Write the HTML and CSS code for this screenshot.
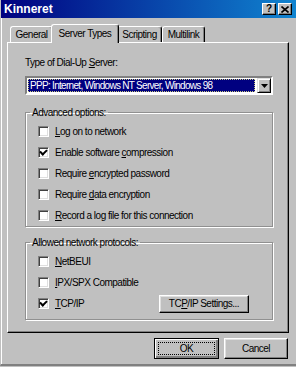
FILE: index.html
```html
<!DOCTYPE html>
<html lang="en">
<head>
    <meta charset="UTF-8">
    <title>Kinneret</title>
    <link rel="stylesheet" href="styles.css">
</head>
<body>
    <div class="window">
        <div class="titlebar">
            <span class="title">Kinneret</span>
            <div class="title-buttons">
                <span class="tbtn">?</span>
                <span class="tbtn close">
                    <svg width="8" height="7" viewBox="0 0 8 7"><path d="M0.5 0.5 L7.5 6.5 M7.5 0.5 L0.5 6.5" stroke="#000" stroke-width="1.6"/></svg>
                </span>
            </div>
        </div>

        <div class="content">
            <div class="tabs">
                <div class="tab">General</div>
                <div class="tab active">Server Types</div>
                <div class="tab">Scripting</div>
                <div class="tab">Multilink</div>
            </div>

            <div class="panel">
                <div class="label">Type of Dial-Up <u>S</u>erver:</div>
                <div class="combo">
                    <div class="combo-value"><span>PPP: Internet, Windows NT Server, Windows 98</span></div>
                    <div class="combo-arrow">
                        <svg width="7" height="4" viewBox="0 0 7 4"><path d="M0 0 H7 L3.5 4 Z" fill="#000"/></svg>
                    </div>
                </div>

                <fieldset class="group advanced">
                    <legend>Advanced options:</legend>
                    <div class="check"><span class="box"></span><span><u>L</u>og on to network</span></div>
                    <div class="check"><span class="box checked"></span><span>Enable software <u>c</u>ompression</span></div>
                    <div class="check"><span class="box"></span><span>Require <u>e</u>ncrypted password</span></div>
                    <div class="check"><span class="box"></span><span>Require <u>d</u>ata encryption</span></div>
                    <div class="check"><span class="box"></span><span><u>R</u>ecord a log file for this connection</span></div>
                </fieldset>

                <fieldset class="group protocols">
                    <legend>Allowed network protocols:</legend>
                    <div class="check"><span class="box"></span><span><u>N</u>etBEUI</span></div>
                    <div class="check"><span class="box"></span><span><u>I</u>PX/SPX Compatible</span></div>
                    <div class="check last">
                        <span class="box checked"></span><span><u>T</u>CP/IP</span>
                        <button class="btn settings">TC<u>P</u>/IP Settings...</button>
                    </div>
                </fieldset>
            </div>

            <div class="actions">
                <button class="btn default"><span class="focus">OK</span></button>
                <button class="btn">Cancel</button>
            </div>
        </div>
    </div>
</body>
</html>
```

FILE: styles.css
```css
body {
    margin: 0;
    background-color: #c0c0c0;
    font-family: 'Liberation Sans', Arial, sans-serif;
    font-size: 10px;
    letter-spacing: -0.5px;
    color: #000;
}
u {
    text-decoration: underline;
    text-underline-offset: 1px;
}
.window {
    width: 296px;
    height: 366px;
    box-sizing: border-box;
    border-left: 1px solid #c0c0c0;
    border-bottom: 2px solid #808080;
    box-shadow: inset 1px 0 #fff;
    background-color: #c0c0c0;
}
.titlebar {
    height: 18px;
    display: flex;
    align-items: center;
    justify-content: space-between;
    padding: 0 4px 0 3px;
    background: linear-gradient(to right, #000080, #1084d0);
}
.title {
    color: #fff;
    font-weight: bold;
    font-size: 12px;
    letter-spacing: 0;
}
.title-buttons {
    display: flex;
    gap: 2px;
}
.tbtn {
    width: 14px;
    height: 12px;
    box-sizing: border-box;
    display: flex;
    align-items: center;
    justify-content: center;
    background-color: #c0c0c0;
    border: 1px solid;
    border-color: #fff #000 #000 #fff;
    box-shadow: inset -1px -1px #808080;
    font-weight: bold;
    font-size: 10px;
    line-height: 10px;
    letter-spacing: 0;
}
.content {
    padding: 6px 7px 0 6px;
}
.tabs {
    display: flex;
    align-items: flex-end;
    height: 18px;
    padding-left: 3px;
}
.tab {
    height: 16px;
    box-sizing: border-box;
    padding: 1px 4.5px 0;
    line-height: 13px;
    border: 1px solid;
    border-color: #fff #000 transparent #fff;
    border-bottom: none;
    border-radius: 3px 3px 0 0;
    box-shadow: inset -1px 0 #808080;
    background-color: #c0c0c0;
}
.tab.active {
    height: 19px;
    margin: 0 -2px -1px;
    padding: 2px 6.5px 0;
    position: relative;
    z-index: 1;
}
.panel {
    height: 291px;
    box-sizing: border-box;
    padding: 13px 15px 0 17px;
    border: 1px solid;
    border-color: #fff #000 #000 #fff;
    box-shadow: inset -1px -1px #808080;
}
.label {
    line-height: 13px;
}
.combo {
    margin-top: 7px;
    height: 19px;
    box-sizing: border-box;
    display: flex;
    align-items: stretch;
    gap: 2px;
    padding: 1px;
    background-color: #fff;
    border: 2px solid;
    border-color: #808080 #fff #fff #808080;
}
.combo-value {
    flex: 1;
    display: flex;
    align-items: center;
    padding-left: 1px;
    background-color: #000080;
    color: #fff;
    letter-spacing: -0.7px;
    border: 1px dotted #c8c880;
}
.combo-arrow {
    width: 14px;
    margin: -1px -1px -1px 0;
    box-sizing: border-box;
    display: flex;
    align-items: center;
    justify-content: center;
    background-color: #c0c0c0;
    border: 1px solid;
    border-color: #dfdfdf #000 #000 #dfdfdf;
    box-shadow: inset 1px 1px #fff, inset -1px -1px #808080;
}
.group {
    margin: 11px 0 0;
    padding: 2px 0 0 12px;
    border: 1px solid #909090;
    box-shadow: 1px 1px #fff, inset 1px 1px #fff;
}
.group legend {
    margin-left: -8px;
    padding: 0 2px;
    line-height: 13px;
}
.protocols {
    margin-top: 9px;
    padding-bottom: 5px;
}
.check {
    height: 21px;
    display: flex;
    align-items: center;
    gap: 6px;
}
.box {
    width: 11px;
    height: 11px;
    box-sizing: border-box;
    display: flex;
    align-items: center;
    justify-content: center;
    background-color: #fff;
    border: 1px solid;
    border-color: #808080 #fff #fff #808080;
    box-shadow: inset 1px 1px #404040, inset -1px -1px #dfdfdf;
}
.box.checked::after {
    content: "";
    width: 5px;
    height: 3px;
    margin-top: -2px;
    border-left: 2px solid #000;
    border-bottom: 2px solid #000;
    transform: rotate(-45deg);
}
.btn {
    height: 21px;
    box-sizing: border-box;
    padding: 0;
    font-family: inherit;
    font-size: 10px;
    letter-spacing: -0.5px;
    color: #000;
    background-color: #c0c0c0;
    border: 1px solid;
    border-color: #fff #000 #000 #fff;
    box-shadow: inset -1px -1px #808080, inset 1px 1px #dfdfdf;
}
.settings {
    width: 90px;
    height: 18px;
    margin-left: auto;
    margin-right: 23px;
}
.actions {
    display: flex;
    justify-content: flex-end;
    gap: 5px;
    margin-top: 5px;
    padding-right: 1px;
}
.actions .btn {
    width: 64px;
}
.btn.default {
    width: 65px;
    border: 1px solid #000;
    box-shadow: inset 1px 1px #fff, inset -1px -1px #808080, inset -2px -2px #808080;
    padding: 3px;
}
.focus {
    display: flex;
    align-items: center;
    justify-content: center;
    height: 100%;
    border: 1px dotted #000;
    box-sizing: border-box;
}
```
